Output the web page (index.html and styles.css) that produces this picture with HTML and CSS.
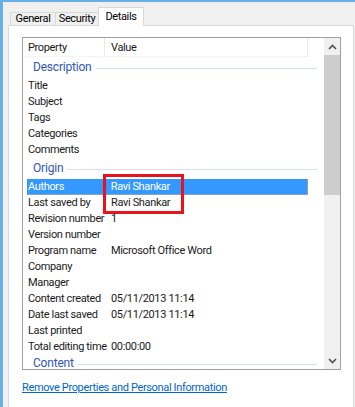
FILE: index.html
```html
<!DOCTYPE html>
<html lang="en">
<head>
    <meta charset="UTF-8">
    <meta name="viewport" content="width=device-width, initial-scale=1.0">
    <title>Properties - Details</title>
    <link rel="stylesheet" href="styles.css">
</head>
<body>
    <div class="window">
        <div class="tabs">
            <div class="tab tab-general">General</div>
            <div class="tab tab-security">Security</div>
            <div class="tab tab-details active">Details</div>
        </div>

        <div class="panel">
            <div class="listview">
                <div class="list-body">
                    <div class="list-header">
                        <div class="col-prop">Property</div>
                        <div class="col-value">Value</div>
                    </div>

                    <div class="group"><span>Description</span><i></i></div>
                    <div class="row"><div class="col-prop">Title</div><div class="col-value"></div></div>
                    <div class="row"><div class="col-prop">Subject</div><div class="col-value"></div></div>
                    <div class="row"><div class="col-prop">Tags</div><div class="col-value"></div></div>
                    <div class="row"><div class="col-prop">Categories</div><div class="col-value"></div></div>
                    <div class="row"><div class="col-prop">Comments</div><div class="col-value"></div></div>

                    <div class="group"><span>Origin</span><i></i></div>
                    <div class="row selected"><div class="col-prop">Authors</div><div class="col-value">Ravi Shankar</div></div>
                    <div class="row"><div class="col-prop">Last saved by</div><div class="col-value">Ravi Shankar</div></div>
                    <div class="row"><div class="col-prop">Revision number</div><div class="col-value">1</div></div>
                    <div class="row"><div class="col-prop">Version number</div><div class="col-value"></div></div>
                    <div class="row"><div class="col-prop">Program name</div><div class="col-value">Microsoft Office Word</div></div>
                    <div class="row"><div class="col-prop">Company</div><div class="col-value"></div></div>
                    <div class="row"><div class="col-prop">Manager</div><div class="col-value"></div></div>
                    <div class="row"><div class="col-prop">Content created</div><div class="col-value">05/11/2013 11:14</div></div>
                    <div class="row"><div class="col-prop">Date last saved</div><div class="col-value">05/11/2013 11:14</div></div>
                    <div class="row"><div class="col-prop">Last printed</div><div class="col-value"></div></div>
                    <div class="row"><div class="col-prop">Total editing time</div><div class="col-value">00:00:00</div></div>

                    <div class="group last"><span>Content</span><i></i></div>
                </div>

                <div class="scrollbar">
                    <div class="scroll-btn">
                        <svg width="9" height="6" viewBox="0 0 9 6"><path d="M1 5 L4.5 1.5 L8 5" fill="none" stroke="#505050" stroke-width="1.6"/></svg>
                    </div>
                    <div class="scroll-thumb"></div>
                    <div class="scroll-track"></div>
                    <div class="scroll-btn">
                        <svg width="9" height="6" viewBox="0 0 9 6"><path d="M1 1 L4.5 4.5 L8 1" fill="none" stroke="#505050" stroke-width="1.6"/></svg>
                    </div>
                </div>

                <!-- recuadro rojo de resaltado -->
                <div class="highlight"></div>
            </div>

            <a href="#" class="remove-link">Remove Properties and Personal Information</a>
        </div>
    </div>
</body>
</html>
```

FILE: styles.css
```css
* {
    margin: 0;
    padding: 0;
    box-sizing: border-box;
}

body {
    font-family: Roboto, 'Segoe UI', 'Liberation Sans', sans-serif;
    font-size: 11px;
    letter-spacing: -0.35px;
    color: #1a1a1a;
    background: #fff;
}

/* Marco de la ventana */
.window {
    height: 407px;
    border-top: 2px solid #66b0e6;
    border-left: 3px solid #66b0e6;
    background: #f0f0f0;
    padding-left: 5px;
    display: flex;
    flex-direction: column;
    overflow: hidden;
}

/* Pestañas */
.tabs {
    display: flex;
    align-items: flex-end;
    height: 23px;
    padding-left: 2px;
}

.tab {
    height: 13px;
    border: 1px solid #d9d9d9;
    border-bottom: none;
    background: #f0f0f0;
    text-align: center;
    line-height: 12px;
    color: #000;
}

.tab-general { width: 46px; }
.tab-security { width: 44px; margin-left: -1px; }
.tab-details { width: 46px; margin-left: -1px; }

.tab.active {
    height: 19px;
    background: #fff;
    line-height: 17px;
    margin-bottom: -1px;
    position: relative;
    z-index: 1;
}

/* Panel blanco */
.panel {
    flex: 1;
    background: #fff;
    border: 1px solid #d9d9d9;
    border-bottom: none;
    margin-right: 1px;
    padding: 11px 0 0 13px;
}

.listview {
    position: relative;
    width: 319px;
    height: 333px;
    border: 1px solid #a0a0a0;
    display: flex;
    background: #fff;
}

.list-body {
    flex: 1;
    overflow: hidden;
    padding-left: 4px;
}

.list-header {
    display: flex;
    height: 19px;
    align-items: center;
    margin-left: -4px;
    padding-left: 4px;
    border-bottom: 1px solid #f2f4f7;
    width: 286px;
}

.list-header .col-prop,
.list-header .col-value {
    border-right: 1px solid #e3ebf3;
    height: 19px;
    line-height: 19px;
}

.col-prop {
    width: 78px;
    padding-left: 1px;
    white-space: nowrap;
}

.col-value {
    width: 203px;
    padding-left: 6px;
    white-space: nowrap;
}

.row {
    display: flex;
    width: 281px;
    height: 16px;
    line-height: 16px;
}

.row.selected {
    background: #3399ff;
    color: #fff;
    border-right: 1px solid #8aa3b8;
    border-bottom: 1px solid #8aa3b8;
    line-height: 15px;
}

.group {
    display: flex;
    align-items: center;
    width: 290px;
    height: 21px;
    padding: 0 0 1px 6px;
    color: #2f55b8;
    font-size: 12px;
    letter-spacing: -0.2px;
}

.group span {
    line-height: 12px;
}

.group.last {
    height: 16px;
    padding: 0 0 0 6px;
}

.group i {
    flex: 1;
    height: 1px;
    margin-left: 4px;
    margin-top: 2px;
    background: #d5deee;
}

/* Barra de desplazamiento */
.scrollbar {
    width: 16px;
    display: flex;
    flex-direction: column;
    background: #f0f0f0;
}

.scroll-btn {
    height: 17px;
    display: flex;
    align-items: center;
    justify-content: center;
}

.scroll-thumb {
    height: 140px;
    background: #cdcdcd;
}

.scroll-track {
    flex: 1;
}

.highlight {
    position: absolute;
    left: 80px;
    top: 136px;
    width: 81px;
    height: 40px;
    border: 3px solid #e8131e;
}

.remove-link {
    display: block;
    margin-top: 11px;
    color: #0066cc;
    text-decoration: underline;
}
```
